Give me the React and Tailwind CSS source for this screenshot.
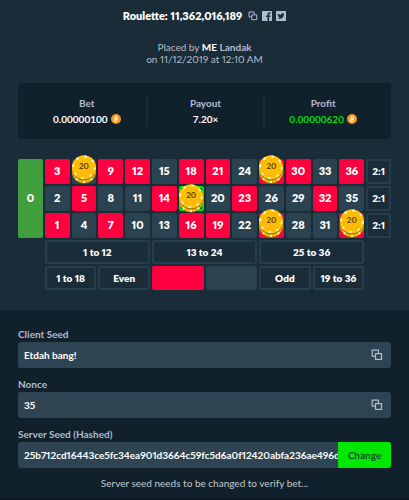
import React, { useState } from "react";

const RED = [1, 3, 5, 7, 9, 12, 14, 16, 18, 19, 21, 23, 25, 27, 30, 32, 34, 36];
const CHIPS = { 6: 20, 17: 20, 25: 20, 27: 20, 34: 20 };
const WINNING = 17;

const ROWS = [3, 2, 1].map((start) =>
  Array.from({ length: 12 }, (_, i) => start + i * 3)
);

function CopyIcon({ className }) {
  return (
    <svg viewBox="0 0 12 12" className={className} fill="none" stroke="currentColor" strokeWidth="1.2">
      <path d="M4.400 7.100H1.200V1.200h6.200v3" />
      <path d="M4.500 4.600h6v5.800h-6z" />
    </svg>
  );
}

function FacebookIcon() {
  return (
    <svg viewBox="0 0 20 20" className="size-[10px]">
      <rect width="20" height="20" rx="1" fill="#b1bad3" />
      <path d="M11 20v-8H8.200V9H11V6.800C11 4 12.600 2.600 15 2.600h2.200v2.900h-1.600c-1.100 0-1.500.6-1.500 1.600V9h3l-.5 3h-2.500v8z" fill="#1a2c38" />
    </svg>
  );
}

function TwitterIcon() {
  return (
    <svg viewBox="0 0 20 20" className="size-[10px]">
      <rect width="20" height="20" rx="1" fill="#b1bad3" />
      <path d="M17 5.600c-.5.2-1 .4-1.600.5.6-.4 1-.9 1.200-1.600-.6.300-1.200.6-1.800.7A2.900 2.900 0 0 0 9.900 7.800C7.500 7.700 5.400 6.500 4 4.800c-.8 1.400-.3 3 .9 3.800-.5 0-.9-.1-1.300-.4 0 1.400 1 2.600 2.300 2.900-.4.100-.9.100-1.300 0 .4 1.200 1.400 2 2.700 2A5.800 5.800 0 0 1 3 14.300 8.200 8.200 0 0 0 15.600 7c.6-.4 1-.9 1.400-1.400z" fill="#1a2c38" />
    </svg>
  );
}

function BitcoinIcon() {
  return (
    <svg viewBox="0 0 20 20" className="size-[10px] shrink-0">
      <circle cx="10" cy="10" r="10" fill="#f7931a" />
      <g transform="rotate(12 10 10)" fill="none" stroke="#fff" strokeWidth="1.800">
        <path d="M8 5.600h2.600a2.100 2.100 0 0 1 0 4.300H8zM8 9.900h3.200a2.200 2.200 0 0 1 0 4.500H8z" />
        <path d="M6.400 5.600H8M6.400 14.400H8M9 3.600v2M11 3.600v2M9 14.400v2M11 14.400v2" strokeWidth="1.300" />
      </g>
    </svg>
  );
}

function Chip({ value }) {
  return (
    <span className="absolute -top-1 left-1/2 z-10 h-[29px] w-[25px] -translate-x-1/2">
      <svg viewBox="0 0 25 29" className="size-full">
        <circle cx="12.500" cy="16.600" r="12" fill="#b07c00" />
        <circle cx="12.500" cy="15.800" r="12" fill="#eeb50e" />
        <path d="M4.500 25.200l1.600-2M12.500 28v-2.200M20.500 25.200l-1.600-2" stroke="#fff1b5" strokeWidth="2" />
        <circle cx="12.500" cy="13.500" r="12" fill="#a87400" />
        <circle cx="12.500" cy="12.300" r="12" fill="#ffc107" />
        <circle cx="12.500" cy="12.300" r="10.800" fill="none" stroke="#fff3c4" strokeWidth="1.800" strokeDasharray="2.600 5.882" />
        <circle cx="12.500" cy="12.300" r="8.500" fill="#fdbd0a" stroke="#f3b500" strokeWidth=".6" />
      </svg>
      <span className="absolute inset-x-0 top-1 text-center text-[8px] leading-[14px] font-bold text-[#5a3600]">
        {value}
      </span>
    </span>
  );
}

function NumberCell({ number }) {
  const chip = CHIPS[number];
  let color = RED.includes(number) ? "bg-[#fe0040]" : "bg-[#2b4350]";
  if (number === WINNING) {
    color = "bg-[#2b4350] border-2 border-[#00e701]";
  }

  return (
    <button type="button" aria-label={String(number)} className={`relative h-[25px] rounded-[2px] ${color}`}>
      {chip ? <Chip value={chip} /> : number}
    </button>
  );
}

function OutsideCell({ children, className }) {
  return (
    <button
      type="button"
      className={`rounded-[2px] border-2 border-[#263e4b] text-[10px] whitespace-nowrap ${className || ""}`}
    >
      {children}
    </button>
  );
}

function Stat({ label, children }) {
  return (
    <div className="flex h-[30px] flex-col items-center justify-center border-l-2 border-[#1a2c38] first:border-l-0">
      <span className="leading-4 text-[#b1bad3]">{label}</span>
      <span className="flex items-center gap-[3px] leading-4">{children}</span>
    </div>
  );
}

function Field({ id, label, value, onChange, readOnly, children }) {
  return (
    <div>
      <label htmlFor={id} className="block leading-4 font-bold text-[#b1bad3]">
        {label}
      </label>
      <div className="flex h-[26px] overflow-hidden rounded-[3px] bg-[#2f4452]">
        <input
          id={id}
          type="text"
          value={value}
          onChange={onChange}
          readOnly={readOnly}
          className="ml-[6px] min-w-0 flex-1 bg-transparent font-bold text-white proportional-nums outline-none"
        />
        {children}
      </div>
    </div>
  );
}

export default function App() {
  const [clientSeed, setClientSeed] = useState("Etdah bang!");

  return (
    <div className="min-h-screen bg-[#0b1a25] font-['Lato',sans-serif] text-[10px] text-white">
      <main className="bg-[#1a2c38]">
        <section className="px-[18px] pb-5">
          <header className="flex items-center justify-center gap-[6px] pt-2 leading-4">
            <h1 className="text-[11px] font-extrabold proportional-nums">Roulette: 11,362,016,189</h1>
            <div className="flex gap-1 text-[#b1bad3]">
              <button type="button" aria-label="Copy"><CopyIcon className="size-[10px]" /></button>
              <a href="#facebook" aria-label="Facebook"><FacebookIcon /></a>
              <a href="#twitter" aria-label="Twitter"><TwitterIcon /></a>
            </div>
          </header>

          <p className="pt-[17px] text-center leading-3 text-[#b6bcc4] proportional-nums">
            Placed by <b className="text-white">ME</b>{" "}
            <a href="#landak" className="font-bold text-[#b1bad3]">Landak</a>
            <br />
            on 11/12/2019 at 12:10 AM
          </p>

          <div className="mt-[18px] grid grid-cols-3 rounded-[3px] bg-[#10212c] px-[10px] py-[13px] font-bold">
            <Stat label="Bet">0.00000100 <BitcoinIcon /></Stat>
            <Stat label="Payout">7.20×</Stat>
            <Stat label="Profit">
              <span className="text-[#00dc04]">0.00000620</span> <BitcoinIcon />
            </Stat>
          </div>

          <div className="mt-5 grid grid-cols-14 gap-[2px] text-[11px] font-extrabold proportional-nums">
            <button type="button" className="row-span-3 rounded-[2px] bg-[#419e3f]">0</button>
            {ROWS.map((row) => (
              <React.Fragment key={row[0]}>
                {row.map((n) => <NumberCell key={n} number={n} />)}
                <OutsideCell>2:1</OutsideCell>
              </React.Fragment>
            ))}
            <OutsideCell className="col-span-4 col-start-2 h-6">1 to 12</OutsideCell>
            <OutsideCell className="col-span-4 h-6">13 to 24</OutsideCell>
            <OutsideCell className="col-span-4 h-6">25 to 36</OutsideCell>
            <OutsideCell className="col-span-2 col-start-2 h-6">1 to 18</OutsideCell>
            <OutsideCell className="col-span-2 h-6">Even</OutsideCell>
            <button type="button" aria-label="Red" className="col-span-2 h-6 rounded-[2px] bg-[#fe0040]" />
            <button type="button" aria-label="Black" className="col-span-2 h-6 rounded-[2px] bg-[#2b4350]" />
            <OutsideCell className="col-span-2 h-6">Odd</OutsideCell>
            <OutsideCell className="col-span-2 h-6">19 to 36</OutsideCell>
          </div>
        </section>

        <section className="flex flex-col gap-2 bg-[#10212c] px-[18px] pt-4 pb-2">
          <Field id="client-seed" label="Client Seed" value={clientSeed} onChange={(e) => setClientSeed(e.target.value)}>
            <button type="button" aria-label="Copy client seed" className="px-2 text-[#b1bad3]">
              <CopyIcon className="size-3" />
            </button>
          </Field>
          <Field id="nonce" label="Nonce" value="35" readOnly>
            <button type="button" aria-label="Copy nonce" className="px-2 text-[#b1bad3]">
              <CopyIcon className="size-3" />
            </button>
          </Field>
          <Field
            id="server-seed"
            label="Server Seed (Hashed)"
            value="25b712cd16443ce5fc34ea901d3664c59fc5d6a0f12420abfa236ae496d"
            readOnly
          >
            <button type="button" className="w-[53px] bg-[#00e701] font-bold text-[#12502b]">
              Change
            </button>
          </Field>
          <p className="text-center leading-[14px] text-[#c3c8d0]">
            Server seed needs to be changed to verify bet...
          </p>
        </section>
      </main>
    </div>
  );
}
